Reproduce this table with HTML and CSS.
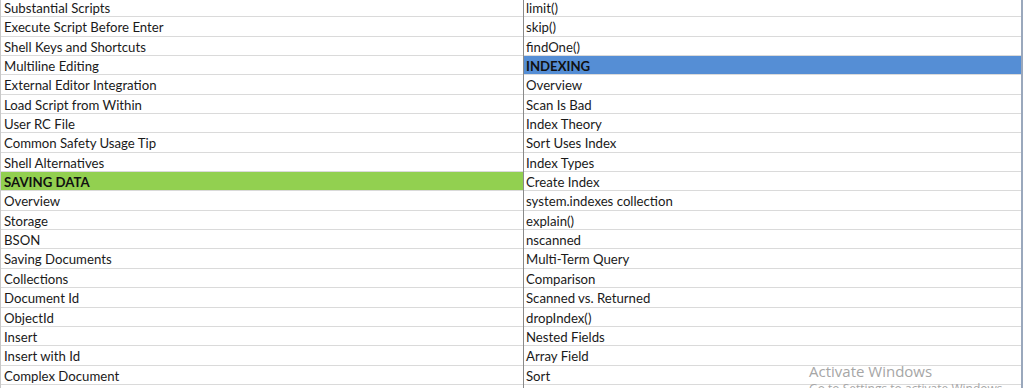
FILE: index.html
```html
<!DOCTYPE html>
<html>
<head>
<meta charset="utf-8">
<link rel="stylesheet" href="styles.css">
</head>
<body>
<div class="sheet">
  <div class="col left">
    <div class="cell">Substantial Scripts</div>
    <div class="cell">Execute Script Before Enter</div>
    <div class="cell">Shell Keys and Shortcuts</div>
    <div class="cell">Multiline Editing</div>
    <div class="cell">External Editor Integration</div>
    <div class="cell">Load Script from Within</div>
    <div class="cell">User RC File</div>
    <div class="cell">Common Safety Usage Tip</div>
    <div class="cell">Shell Alternatives</div>
    <div class="cell head green">SAVING DATA</div>
    <div class="cell">Overview</div>
    <div class="cell">Storage</div>
    <div class="cell">BSON</div>
    <div class="cell">Saving Documents</div>
    <div class="cell">Collections</div>
    <div class="cell">Document Id</div>
    <div class="cell">ObjectId</div>
    <div class="cell">Insert</div>
    <div class="cell">Insert with Id</div>
    <div class="cell">Complex Document</div>
    <div class="cell"></div>
  </div>
  <div class="col right">
    <div class="cell">limit()</div>
    <div class="cell">skip()</div>
    <div class="cell">findOne()</div>
    <div class="cell head blue">INDEXING</div>
    <div class="cell">Overview</div>
    <div class="cell">Scan Is Bad</div>
    <div class="cell">Index Theory</div>
    <div class="cell">Sort Uses Index</div>
    <div class="cell">Index Types</div>
    <div class="cell">Create Index</div>
    <div class="cell">system.indexes collection</div>
    <div class="cell">explain()</div>
    <div class="cell">nscanned</div>
    <div class="cell">Multi-Term Query</div>
    <div class="cell">Comparison</div>
    <div class="cell">Scanned vs. Returned</div>
    <div class="cell">dropIndex()</div>
    <div class="cell">Nested Fields</div>
    <div class="cell">Array Field</div>
    <div class="cell">Sort</div>
    <div class="cell"></div>
  </div>
</div>
<div class="watermark">
  <div class="wm-title">Activate Windows</div>
  <div class="wm-sub">Go to Settings to activate Windows.</div>
</div>
</body>
</html>
```

FILE: styles.css
```css
html, body {
  margin: 0;
  padding: 0;
  background: #ffffff;
  overflow: hidden;
}
body {
  width: 1024px;
  height: 388px;
  position: relative;
  font-family: Lato, "Open Sans", sans-serif;
  font-size: 13.2px;
  color: #1a1a1a;
}
.sheet {
  display: grid;
  grid-template-columns: 522px 500px;
  width: 1023px;
  margin-top: -2px;
  border-left: 1px solid #c8c8c8;
  box-sizing: border-box;
}
.col {
  display: flex;
  flex-direction: column;
}
.right {
  border-left: 1px solid #8a8a8a;
  border-right: 2px solid #9aa8bc;
}
.cell {
  height: 19.35px;
  box-sizing: border-box;
  border-bottom: 1px solid #dadada;
  padding-left: 3px;
  padding-top: 1px;
  line-height: 19px;
  white-space: nowrap;
}
.right .cell {
  padding-left: 2px;
}
.head {
  font-weight: bold;
  color: #111;
}
.green {
  background: #92d050;
}
.blue {
  background: #558ed5;
}
.watermark {
  position: absolute;
  left: 809px;
  top: 361px;
  color: #a6a6a6;
  font-family: "Open Sans", sans-serif;
}
.wm-title {
  font-size: 15px;
  line-height: 20px;
}
.wm-sub {
  font-size: 12px;
  line-height: 16px;
}
```
